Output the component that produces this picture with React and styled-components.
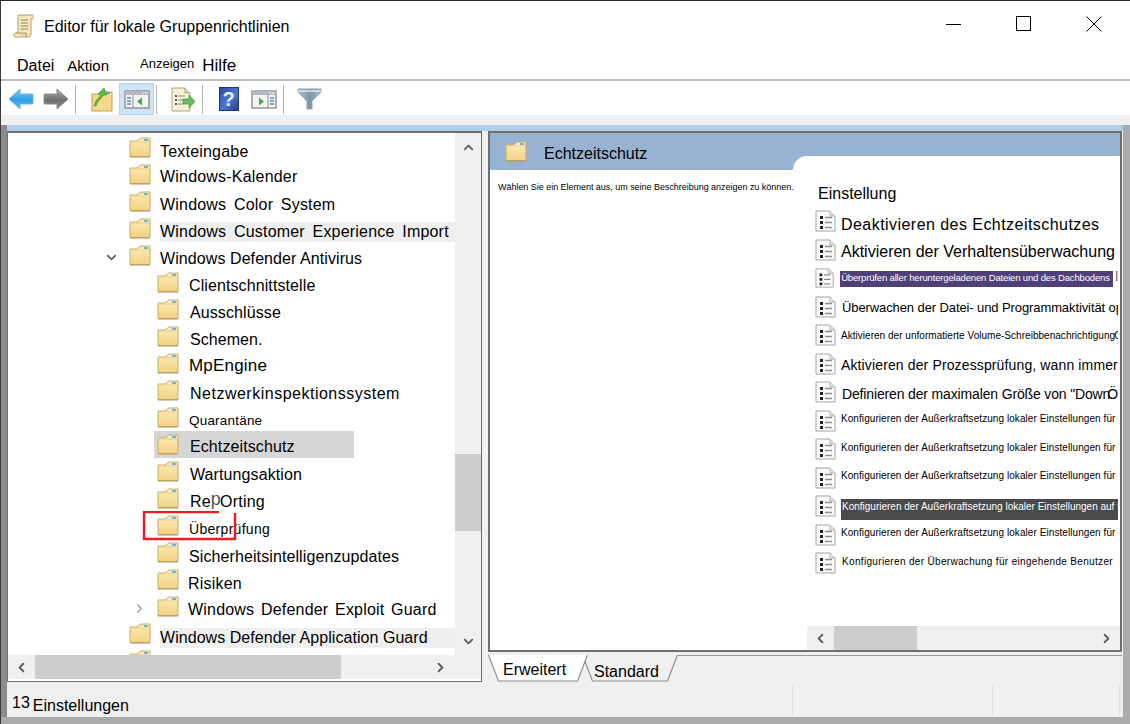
import React from 'react';
import styled, { createGlobalStyle } from 'styled-components';
import { ChevronDown, ChevronLeft, ChevronRight, ChevronUp } from 'lucide-react';

const GlobalStyle = createGlobalStyle`
  html, body {
    margin: 0;
    padding: 0;
    background: #fff;
  }
  * {
    box-sizing: border-box;
  }
`;

const treeItems = [
  { level: 1, text: 'Texteingabe', drop: 8 },
  { level: 1, text: 'Windows-Kalender', drop: 6 },
  { level: 1, text: 'Windows Color System', drop: 7, word: 3 },
  { level: 1, text: 'Windows Customer Experience Import', drop: 7, word: 3, band: true },
  { level: 1, text: 'Windows Defender Antivirus', drop: 7, track: 0.08, chevron: 'down' },
  { level: 2, text: 'Clientschnittstelle', drop: 7, track: 0.1 },
  { level: 2, text: 'Ausschlüsse', drop: 7, shift: 1, track: 0.1 },
  { level: 2, text: 'Schemen.', drop: 7, shift: 1, track: 0.05 },
  { level: 2, text: 'MpEngine', drop: 6, size: 17 },
  { level: 2, text: 'Netzwerkinspektionssystem', drop: 7, shift: 1, track: 0.5 },
  { level: 2, text: 'Quarantäne', drop: 7, size: 13.5 },
  { level: 2, text: 'Echtzeitschutz', drop: 6, shift: 1, track: 0.1, selected: true },
  { level: 2, text: 'Wartungsaktion', drop: 7, shift: 1, track: 0.1 },
  { level: 2, text: 'report', drop: 7, shift: 1 },
  { level: 2, text: 'Überprüfung', drop: 7, size: 14, track: 0.3, marked: true },
  { level: 2, text: 'Sicherheitsintelligenzupdates', drop: 8, track: 0.1 },
  { level: 2, text: 'Risiken', drop: 8, shift: -1 },
  { level: 2, text: 'Windows Defender Exploit Guard', drop: 7, shift: -1, word: 2, chevron: 'right' },
  { level: 1, text: 'Windows Defender Application Guard', drop: 8, track: 0.05, band: true },
  { level: 1, text: '', drop: 7 },
];

const settings = [
  { text: 'Deaktivieren des Echtzeitschutzes', size: 16, top: 6, spacing: 0.45 },
  { text: 'Aktivieren der Verhaltensüberwachung', size: 16, top: 4, spacing: 0 },
  { text: 'Überprüfen aller heruntergeladenen Dateien und des Dachbodens', kind: 'purple' },
  { text: 'Überwachen der Datei- und Programmaktivität op', size: 13, top: 3, shift: 1, spacing: -0.1 },
  { text: 'Aktivieren der unformatierte Volume-Schreibbenachrichtigung', size: 10, top: 3, spacing: 0.03, overlap: 'C', pull: 1 },
  { text: 'Aktivieren der Prozessprüfung, wann immer', size: 14, top: 3, spacing: 0.13 },
  { text: 'Definieren der maximalen Größe von "Down', size: 14, top: 4, shift: 1, spacing: -0.15, overlap: 'Ö', pull: 3 },
  { text: 'Konfigurieren der Außerkraftsetzung lokaler Einstellungen für ,', size: 10, top: 0, spacing: 0.07 },
  { text: 'Konfigurieren der Außerkraftsetzung lokaler Einstellungen für ,', size: 10, top: 1, spacing: 0.07 },
  { text: 'Konfigurieren der Außerkraftsetzung lokaler Einstellungen für', size: 10, top: 0, spacing: 0.07 },
  { text: 'Konfigurieren der Außerkraftsetzung lokaler Einstellungen auf typ', kind: 'dark' },
  { text: 'Konfigurieren der Außerkraftsetzung lokaler Einstellungen für', size: 10, top: 0, spacing: 0.07 },
  { text: 'Konfigurieren der Überwachung für eingehende Benutzer', size: 10, top: 1, shift: 1, spacing: 0.33 },
];

const FolderIcon = () => (
  <svg width="22" height="21" viewBox="0 0 22 21">
    <defs>
      <linearGradient id="folderFill" x1="0" y1="0" x2="0" y2="1">
        <stop offset="0" stopColor="#fdeeb8" />
        <stop offset="1" stopColor="#f3d184" />
      </linearGradient>
    </defs>
    <path d="M1 4 L1 19.5 L21 19.5 L21 1 L12 1 L8 4 Z" fill="url(#folderFill)" stroke="#c8ab6b" />
    <path d="M1 5 H21" stroke="#e8cf90" />
    <rect x="15" y="2" width="4" height="2" fill="#6cb2e0" />
    <path d="M1 20 H21" stroke="#b59858" />
  </svg>
);

const ListIcon = () => (
  <svg width="21" height="22" viewBox="0 0 21 22">
    <path d="M1 1 H15 L20 6 V21 H1 Z" fill="#fbfbfb" stroke="#a4a4a4" />
    <path d="M15 1 V6 H20" fill="#e4e4e4" stroke="#b4b4b4" />
    <path d="M5 6 h3 v3 h-3 Z M5 11 h3 v3 h-3 Z M5 16 h3 v3 h-3 Z" fill="#222" />
    <path d="M10 7.5 h7 M10 12.5 h7 M10 17.5 h7" stroke="#8f8f8f" strokeWidth="1.4" />
  </svg>
);

const ScrollIcon = () => (
  <svg width="22" height="24" viewBox="0 0 22 24">
    <path d="M5 1 H19 C21 1 21 5 19 5 L18 5 V20 C18 23 16 23 14 23 H3 C0 23 0 19 3 19 H5 Z" fill="#f4e7bd" stroke="#b39f6e" />
    <path d="M8 6 h7 M8 9 h7 M8 12 h7 M8 15 h7" stroke="#8b8268" />
    <path d="M3 19 H13 C14 20 14 22 13 23" fill="#e5d5a2" stroke="#b39f6e" />
  </svg>
);

const ArrowIcon = ({ dir, gray }) => {
  const id = gray ? 'arrowGray' : 'arrowBlue';
  return (
    <svg width="26" height="22" viewBox="0 0 26 22" style={{ transform: dir === 'right' ? 'scaleX(-1)' : 'none' }}>
      <defs>
        <linearGradient id={id} x1="0" y1="0" x2="0" y2="1">
          <stop offset="0" stopColor={gray ? '#b0b0b0' : '#7cc8f6'} />
          <stop offset="0.55" stopColor={gray ? '#6e6e6e' : '#2f9fe8'} />
          <stop offset="1" stopColor={gray ? '#8a8a8a' : '#62b8ee'} />
        </linearGradient>
      </defs>
      <path d="M1 11 L12 1 V6 H24 Q25 6 25 7 V15 Q25 16 24 16 H12 V21 Z" fill={`url(#${id})`} stroke={gray ? '#8c8c8c' : '#68b4e6'} />
    </svg>
  );
};

const FolderUpIcon = () => (
  <svg width="22" height="25" viewBox="0 0 22 25">
    <path d="M1 7 V24 H21 V5 H13 L10 7 Z" fill="#f6d88e" stroke="#c49f55" />
    <rect x="15" y="5" width="4" height="2" fill="#5ea9d8" />
    <path d="M3 19 C5 13 7 11 10 9 L7 7 L13 1 L16 8 L13 8 C10 11 6 15 5 19 Z" fill="#5dbb3f" stroke="#3d8e29" strokeWidth="0.6" />
  </svg>
);

const PaneIcon = ({ side }) => {
  const left = side === 'left';
  return (
    <svg width="26" height="19" viewBox="0 0 26 19">
      <rect x="1" y="1" width="24" height="17" fill="#f4f5f2" stroke="#8a8f96" strokeWidth="1.4" />
      <rect x="1" y="1" width="24" height="4" fill="#b4b9bf" />
      <path d="M18 3 h2 M21 3 h2" stroke="#fff" />
      <path d={left ? 'M9 5 V18' : 'M17 5 V18'} stroke="#8a8f96" />
      <path d={left ? 'M3 8 h4 M3 11 h4 M3 14 h4' : 'M19 8 h4 M19 11 h4 M19 14 h4'} stroke="#5d86c0" strokeWidth="1.6" />
      <path d={left ? 'M18 7.5 L13 11.5 L18 15.5 Z' : 'M8 7.5 L13 11.5 L8 15.5 Z'} fill="#3fae3a" />
    </svg>
  );
};

const ExportIcon = () => (
  <svg width="26" height="25" viewBox="0 0 26 25">
    <path d="M2 1 H15 L20 6 V24 H2 Z" fill="#f8f1d8" stroke="#a7a394" />
    <path d="M15 1 V6 H20" fill="#e4dcc0" stroke="#a7a394" />
    <path d="M5 9 h2 M5 13 h2 M5 17 h2" stroke="#222" strokeWidth="1.6" />
    <path d="M8 9 h7 M8 13 h5 M8 17 h5" stroke="#8d8d8d" strokeWidth="1.2" />
    <path d="M13 12 H19 V8 L25 14.5 L19 21 V17 H13 Z" fill="#63c05a" stroke="#3f9a3a" strokeWidth="0.7" />
  </svg>
);

const FilterIcon = () => (
  <svg width="25" height="22" viewBox="0 0 25 22">
    <defs>
      <linearGradient id="funnelFill" x1="0" y1="0" x2="1" y2="0">
        <stop offset="0" stopColor="#b5c7d3" />
        <stop offset="0.5" stopColor="#7d97a8" />
        <stop offset="1" stopColor="#a8bcc9" />
      </linearGradient>
    </defs>
    <path d="M1 1 H24 V4 L15 13 V21 H10 V13 L1 4 Z" fill="url(#funnelFill)" stroke="#8aa0ae" />
    <path d="M1 3 H24" stroke="#dfe8ee" strokeWidth="1.5" />
  </svg>
);

const TabShape = ({ width, active }) => (
  <TabSvg width={width} height="27" viewBox={`0 0 ${width} 27`}>
    <path
      d={`M0.5 0 L10.5 26 H${width - 10.5} L${width - 0.5} 0`}
      fill={active ? '#fff' : '#f0f0f0'}
      stroke="#8d8d8d"
      strokeWidth="1.2"
    />
  </TabSvg>
);

const renderTreeLabel = (item) => {
  if (item.text === 'report') {
    return (
      <>
        Re<RaisedLetter>p</RaisedLetter>Orting
      </>
    );
  }
  return item.text;
};

const App = () => {
  return (
    <Window>
      <GlobalStyle />
      <TitleBar>
        <TitleIcon>
          <ScrollIcon />
        </TitleIcon>
        <TitleText>Editor für lokale Gruppenrichtlinien</TitleText>
        <WindowControls>
          <WindowButton>
            <svg width="16" height="16" viewBox="0 0 16 16">
              <path d="M0 8.5 H15" stroke="#000" />
            </svg>
          </WindowButton>
          <WindowButton>
            <svg width="16" height="16" viewBox="0 0 16 16">
              <rect x="0.5" y="0.5" width="14" height="14" fill="none" stroke="#000" />
            </svg>
          </WindowButton>
          <WindowButton>
            <svg width="16" height="16" viewBox="0 0 16 16">
              <path d="M0.5 0.5 L15.5 15.5 M15.5 0.5 L0.5 15.5" stroke="#000" />
            </svg>
          </WindowButton>
        </WindowControls>
      </TitleBar>

      <MenuBar>
        <MenuItem $left={16} $size={16}>Datei</MenuItem>
        <MenuItem $left={13} $size={15}>Aktion</MenuItem>
        <MenuItem $left={31} $size={13} $raise={4}>Anzeigen</MenuItem>
        <MenuItem $left={8} $size={17}>Hilfe</MenuItem>
      </MenuBar>

      <ToolBar>
        <ToolButton><ArrowIcon dir="left" /></ToolButton>
        <ToolButton><ArrowIcon dir="right" gray /></ToolButton>
        <ToolSeparator />
        <ToolButton><FolderUpIcon /></ToolButton>
        <ToolButton $active><PaneIcon side="left" /></ToolButton>
        <ToolSeparator />
        <ToolButton><ExportIcon /></ToolButton>
        <ToolSeparator />
        <ToolButton><HelpBox>?</HelpBox></ToolButton>
        <ToolButton><PaneIcon side="right" /></ToolButton>
        <ToolSeparator />
        <ToolButton><FilterIcon /></ToolButton>
      </ToolBar>
      <ToolGap />

      <Workspace>
        <Center>
          <BlueStrip />
          <Panes>
            <TreePane>
              <TreeBody>
                <TreeList>
                  {treeItems.map((item, i) => (
                    <TreeRow key={i} $level={item.level}>
                      <ChevronSlot>
                        {item.chevron === 'down' && <ChevronDown size={15} strokeWidth={2.6} color="#5c5c5c" />}
                        {item.chevron === 'right' && <ChevronRight size={15} strokeWidth={2.2} color="#a0a0a0" />}
                      </ChevronSlot>
                      <TreeItem $selected={item.selected}>
                        <FolderSlot>
                          <FolderIcon />
                        </FolderSlot>
                        <TreeLabel
                          $drop={item.drop}
                          $size={item.size}
                          $shift={item.shift}
                          $band={item.band}
                          $level={item.level}
                          $word={item.word}
                          $track={item.track}
                        >
                          {renderTreeLabel(item)}
                        </TreeLabel>
                      </TreeItem>
                      {item.marked && (
                        <RedMark width="95" height="30" viewBox="0 0 95 30">
                          <path d="M77 1 H2 V28 H93 V2" fill="none" stroke="#ec1c24" strokeWidth="2.5" />
                        </RedMark>
                      )}
                    </TreeRow>
                  ))}
                </TreeList>
                <VScroll>
                  <ScrollArrow $tall>
                    <ChevronUp size={15} strokeWidth={3} color="#606060" />
                  </ScrollArrow>
                  <VThumb />
                  <ScrollArrow $tall $end>
                    <ChevronDown size={15} strokeWidth={3} color="#606060" />
                  </ScrollArrow>
                </VScroll>
              </TreeBody>
              <HScroll>
                <ScrollArrow>
                  <ChevronLeft size={15} strokeWidth={3} color="#606060" />
                </ScrollArrow>
                <HThumb $width={306} />
                <ScrollArrow $end $corner={27}>
                  <ChevronRight size={15} strokeWidth={3} color="#606060" />
                </ScrollArrow>
              </HScroll>
            </TreePane>

            <RightColumn>
              <DetailFrame>
                <DescriptionColumn>
                  <DetailHead>
                    <FolderIcon />
                    <DetailTitle>Echtzeitschutz</DetailTitle>
                  </DetailHead>
                  <Description>Wählen Sie ein Element aus, um seine Beschreibung anzeigen zu können.</Description>
                </DescriptionColumn>
                <ListColumn>
                  <ListBody>
                    <ListHeading>Einstellung</ListHeading>
                    {settings.map((s, i) => (
                      <SettingRow key={i}>
                        <ListIcon />
                        {s.kind === 'purple' && (
                          <>
                            <PurpleLabel>{s.text}</PurpleLabel>
                            <TrailingMark>|</TrailingMark>
                          </>
                        )}
                        {s.kind === 'dark' && <DarkLabel>{s.text}</DarkLabel>}
                        {!s.kind && (
                          <SettingLabel $size={s.size} $top={s.top} $shift={s.shift} $spacing={s.spacing}>
                            {s.text}
                            {s.overlap && <OverlapLetter $pull={s.pull}>{s.overlap}</OverlapLetter>}
                          </SettingLabel>
                        )}
                      </SettingRow>
                    ))}
                  </ListBody>
                  <ListScroll>
                    <ScrollArrow>
                      <ChevronLeft size={15} strokeWidth={3} color="#606060" />
                    </ScrollArrow>
                    <HThumb $width={83} />
                    <ScrollArrow $end>
                      <ChevronRight size={15} strokeWidth={3} color="#606060" />
                    </ScrollArrow>
                  </ListScroll>
                </ListColumn>
              </DetailFrame>
              <TabStrip>
                <Tab $width={100} $active>
                  <TabShape width={100} active />
                  <TabText $left={15} $top={6}>Erweitert</TabText>
                </Tab>
                <Tab $width={96} $back>
                  <TabShape width={96} />
                  <TabText $left={12} $top={8}>Standard</TabText>
                </Tab>
              </TabStrip>
            </RightColumn>
          </Panes>
          <StatusBar>
            <StatusCell $width={786}>
              <StatusCount>13</StatusCount>
              <StatusText>Einstellungen</StatusText>
            </StatusCell>
            <StatusCell $width={200} />
            <StatusCell $width={127} />
          </StatusBar>
        </Center>
      </Workspace>
      <BottomEdge />
    </Window>
  );
};

export default App;

const Window = styled.div`
  width: 1130px;
  height: 724px;
  overflow: hidden;
  display: flex;
  flex-direction: column;
  background: #fff;
  color: #000;
  font-family: "Liberation Sans", Arial, sans-serif;
  border-top: 1px solid #2a2a2a;
  border-left: 1px solid #3a3a3a;
`;

const TitleBar = styled.div`
  height: 49px;
  flex: none;
  display: flex;
  align-items: center;
  padding: 0 1px 0 12px;
`;

const TitleIcon = styled.div`
  width: 31px;
  height: 24px;
`;

const TitleText = styled.div`
  font-size: 16px;
  margin-top: 2px;
`;

const WindowControls = styled.div`
  display: flex;
  align-self: flex-start;
  margin-left: auto;
`;

const WindowButton = styled.div`
  width: 70px;
  height: 46px;
  display: flex;
  align-items: center;
  justify-content: center;
`;

const MenuBar = styled.div`
  height: 31px;
  flex: none;
  display: flex;
  align-items: center;
  padding-top: 2px;
  border-bottom: 2px solid #bdbdbd;
`;

const MenuItem = styled.div`
  font-size: ${(p) => p.$size}px;
  margin-left: ${(p) => p.$left}px;
  margin-bottom: ${(p) => p.$raise || 0}px;
`;

const ToolBar = styled.div`
  height: 34px;
  flex: none;
  display: flex;
  padding-left: 2px;
  padding-top: 2px;
`;

const ToolButton = styled.div`
  width: 35px;
  height: 32px;
  display: flex;
  align-items: center;
  justify-content: center;
  background: ${(p) => (p.$active ? '#cde4f7' : 'transparent')};
  border: 1px solid ${(p) => (p.$active ? '#b0d6f3' : 'transparent')};
`;

const ToolSeparator = styled.div`
  width: 1px;
  height: 29px;
  margin: 2px 8px 0 2px;
  background: #b4b4b4;
`;

const HelpBox = styled.div`
  width: 20px;
  height: 24px;
  display: flex;
  align-items: center;
  justify-content: center;
  background: linear-gradient(135deg, #2c4a9e, #4a78d0 55%, #253f8c);
  border: 1px solid #203479;
  color: #e8eefb;
  font-size: 20px;
  font-weight: 700;
`;

const ToolGap = styled.div`
  height: 10px;
  flex: none;
  background: #f0f0f0;
`;

const Workspace = styled.div`
  height: 592px;
  flex: none;
  display: flex;
  padding: 0 7px 0 6px;
  background: linear-gradient(90deg, #8c8c8c 0, #8c8c8c 50%, #ababab 50%, #ababab 100%);
`;

const Center = styled.div`
  flex: 1;
  min-width: 0;
  display: flex;
  flex-direction: column;
  background: #f0f0f0;
`;

const BlueStrip = styled.div`
  height: 6px;
  flex: none;
  background: #b3cde8;
`;

const Panes = styled.div`
  height: 551px;
  flex: none;
  display: flex;
  gap: 6px;
  padding-right: 1px;
`;

const TreePane = styled.div`
  width: 475px;
  height: 551px;
  flex: none;
  display: flex;
  flex-direction: column;
  background: #fff;
  border: 1px solid #6e6e6e;
  border-top-width: 2px;
`;

const TreeBody = styled.div`
  height: 522px;
  flex: none;
  display: flex;
`;

const TreeList = styled.div`
  width: 447px;
  height: 522px;
  overflow: hidden;
  padding-top: 1px;
`;

const TreeRow = styled.div`
  position: relative;
  height: 27px;
  display: flex;
  padding-left: ${(p) => (p.$level === 1 ? 96 : 124)}px;
`;

const ChevronSlot = styled.div`
  width: 25px;
  padding-top: 8px;
  flex: none;
  margin-right: -3px;
`;

const TreeItem = styled.div`
  display: flex;
  flex: ${(p) => (p.$selected ? 'none' : 1)};
  width: ${(p) => (p.$selected ? '200px' : 'auto')};
  min-width: 0;
  padding-left: 3px;
  background: ${(p) => (p.$selected ? '#d6d6d6' : 'transparent')};
`;

const FolderSlot = styled.div`
  width: 22px;
  height: 21px;
  flex: none;
  margin-top: 3px;
`;

const TreeLabel = styled.div`
  flex: 1;
  height: 20px;
  line-height: 20px;
  margin-top: ${(p) => p.$drop}px;
  margin-left: ${(p) => (p.$level === 2 ? 10 : 9) + (p.$shift || 0)}px;
  font-size: ${(p) => p.$size || 16}px;
  white-space: nowrap;
  background: ${(p) => (p.$band ? '#efefef' : 'transparent')};
  letter-spacing: ${(p) => (p.$track !== undefined ? p.$track : 0.2)}px;
  word-spacing: ${(p) => p.$word || 0}px;
`;

const RaisedLetter = styled.span`
  color: #555;
  font-size: 18px;
  line-height: 0;
  margin-right: -1px;
  vertical-align: 2px;
`;

const RedMark = styled.svg`
  position: absolute;
  left: 134px;
  top: -1px;
`;

const VScroll = styled.div`
  width: 26px;
  flex: none;
  display: flex;
  flex-direction: column;
  background: #f0f0f0;
`;

const ScrollArrow = styled.div`
  width: ${(p) => (p.$tall ? '100%' : '27px')};
  height: ${(p) => (p.$tall ? '28px' : '100%')};
  flex: none;
  display: flex;
  align-items: center;
  justify-content: center;
  ${(p) => (p.$end ? (p.$tall ? 'margin-top: auto;' : 'margin-left: auto;') : '')}
  ${(p) => (p.$corner ? `margin-right: ${p.$corner}px;` : '')}
`;

const VThumb = styled.div`
  height: 77px;
  margin-top: 293px;
  background: #cdcdcd;
`;

const HScroll = styled.div`
  height: 24px;
  flex: none;
  display: flex;
  background: #f0f0f0;
`;

const HThumb = styled.div`
  width: ${(p) => p.$width}px;
  background: #cdcdcd;
`;

const RightColumn = styled.div`
  flex: 1;
  min-width: 0;
  display: flex;
  flex-direction: column;
`;

const DetailFrame = styled.div`
  height: 521px;
  flex: none;
  display: flex;
  border: 2px solid #707070;
  background: linear-gradient(#98b3d1 37px, #fff 37px);
`;

const DescriptionColumn = styled.div`
  width: 303px;
  flex: none;
`;

const DetailHead = styled.div`
  height: 37px;
  display: flex;
  align-items: center;
  padding: 0 0 0 15px;
`;

const DetailTitle = styled.div`
  font-size: 16px;
  margin-left: 17px;
  margin-top: 4px;
`;

const Description = styled.div`
  position: relative;
  z-index: 1;
  margin: 11px 0 0 8px;
  font-size: 9px;
  line-height: 12px;
  letter-spacing: -0.03px;
  white-space: nowrap;
`;

const ListColumn = styled.div`
  flex: 1;
  min-width: 0;
  margin-top: 23px;
  display: flex;
  flex-direction: column;
  background: #fff;
  border-top-left-radius: 14px;
`;

const ListBody = styled.div`
  flex: 1;
  min-height: 0;
  padding: 26px 2px 0 22px;
  overflow: hidden;
`;

const ListHeading = styled.div`
  height: 20px;
  line-height: 20px;
  margin: 2px 0 6px 3px;
  font-size: 16px;
`;

const SettingRow = styled.div`
  height: 28.5px;
  display: flex;
  overflow: hidden;
`;

const SettingLabel = styled.div`
  flex: 1;
  min-width: 0;
  height: 18px;
  line-height: 18px;
  margin-top: ${(p) => p.$top}px;
  margin-left: ${(p) => 5 + (p.$shift || 0)}px;
  font-size: ${(p) => p.$size}px;
  letter-spacing: ${(p) => p.$spacing || 0}px;
  white-space: nowrap;
  overflow: hidden;
`;

const OverlapLetter = styled.span`
  margin-left: -${(p) => p.$pull}px;
`;

const PurpleLabel = styled.div`
  width: 273px;
  height: 16px;
  flex: none;
  margin: 4px 0 0 6px;
  padding: 1px 0 0 1px;
  background: #50407a;
  color: #fff;
  font-size: 9.5px;
  line-height: 12px;
  letter-spacing: -0.16px;
  white-space: nowrap;
  overflow: hidden;
`;

const TrailingMark = styled.div`
  margin: 2px 0 0 2px;
  font-size: 11px;
  color: #333;
`;

const DarkLabel = styled.div`
  flex: 1;
  min-width: 0;
  height: 21px;
  margin: 4px 0 0 5px;
  padding: 1px 0 0 1px;
  background: #4a4a4a;
  color: #fff;
  font-size: 10px;
  line-height: 14px;
  white-space: nowrap;
  overflow: hidden;
`;

const ListScroll = styled.div`
  height: 24px;
  flex: none;
  margin-left: 14px;
  display: flex;
  background: #f0f0f0;
`;

const TabStrip = styled.div`
  height: 29px;
  flex: none;
  display: flex;
  padding-top: 3px;
  background: #f0f0f0;
  background-image: linear-gradient(#9a9a9a, #9a9a9a);
  background-size: 100% 1px;
  background-position: 0 3px;
  background-repeat: no-repeat;
`;

const Tab = styled.div`
  position: relative;
  width: ${(p) => p.$width}px;
  height: 27px;
  margin-left: ${(p) => (p.$back ? '-6px' : '0')};
  z-index: ${(p) => (p.$active ? 1 : 0)};
`;

const TabSvg = styled.svg`
  position: absolute;
  left: 0;
  top: 0;
`;

const TabText = styled.div`
  position: relative;
  padding-left: ${(p) => p.$left}px;
  padding-top: ${(p) => p.$top}px;
  font-size: 16px;
  line-height: 18px;
`;

const StatusBar = styled.div`
  height: 35px;
  flex: none;
  display: flex;
  background: #f0f0f0;
`;

const StatusCell = styled.div`
  width: ${(p) => p.$width}px;
  height: 32px;
  flex: none;
  display: flex;
  margin-top: 3px;
  padding: 0 0 0 5px;
  border-right: 1px solid #e0e0e0;
`;

const StatusCount = styled.div`
  font-size: 16px;
  line-height: 20px;
  margin-top: 8px;
`;

const StatusText = styled.div`
  font-size: 16px;
  line-height: 20px;
  margin: 11px 0 0 3px;
`;

const BottomEdge = styled.div`
  height: 7px;
  flex: none;
  background: #aaa;
`;
